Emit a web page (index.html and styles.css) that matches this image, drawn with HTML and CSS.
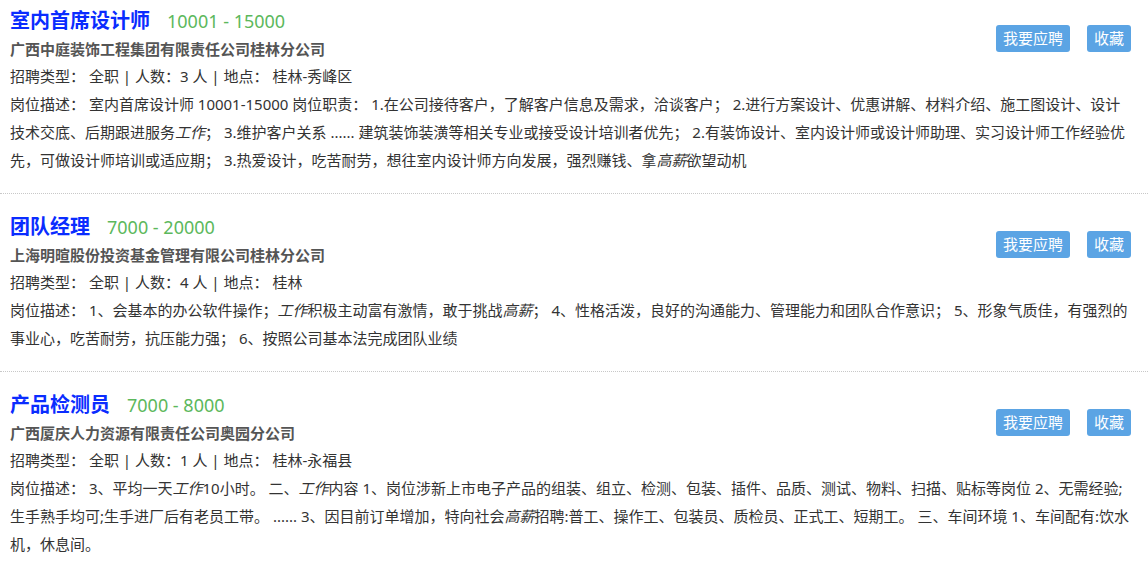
FILE: index.html
```html
<!DOCTYPE html>
<html lang="zh-CN">
<head>
<meta charset="utf-8">
<title>职位列表</title>
<link rel="stylesheet" href="styles.css">
</head>
<body>
<div class="job-list">
  <div class="job">
    <div class="job-head">
      <div class="job-main">
        <div class="job-title"><a class="job-name" href="#">室内首席设计师</a><span class="salary">10001 - 15000</span></div>
        <div class="company">广西中庭装饰工程集团有限责任公司桂林分公司</div>
        <div class="info">招聘类型： 全职 | 人数：3 人 | 地点： 桂林-秀峰区</div>
      </div>
      <div class="actions">
        <a class="btn" href="#">我要应聘</a>
        <a class="btn" href="#">收藏</a>
      </div>
    </div>
    <div class="desc">岗位描述： 室内首席设计师 10001-15000 岗位职责： 1.在公司接待客户，了解客户信息及需求，洽谈客户； 2.进行方案设计、优惠讲解、材料介绍、施工图设计、设计技术交底、后期跟进服务<em>工作</em>； 3.维护客户关系 ...... 建筑装饰装潢等相关专业或接受设计培训者优先； 2.有装饰设计、室内设计师或设计师助理、实习设计师工作经验优先，可做设计师培训或适应期； 3.热爱设计，吃苦耐劳，想往室内设计师方向发展，强烈赚钱、拿<em>高薪</em>欲望动机</div>
  </div>

  <div class="job">
    <div class="job-head">
      <div class="job-main">
        <div class="job-title"><a class="job-name" href="#">团队经理</a><span class="salary">7000 - 20000</span></div>
        <div class="company">上海明暄股份投资基金管理有限公司桂林分公司</div>
        <div class="info">招聘类型： 全职 | 人数：4 人 | 地点： 桂林</div>
      </div>
      <div class="actions">
        <a class="btn" href="#">我要应聘</a>
        <a class="btn" href="#">收藏</a>
      </div>
    </div>
    <div class="desc">岗位描述： 1、会基本的办公软件操作；<em>工作</em>积极主动富有激情，敢于挑战<em>高薪</em>； 4、性格活泼，良好的沟通能力、管理能力和团队合作意识； 5、形象气质佳，有强烈的事业心，吃苦耐劳，抗压能力强； 6、按照公司基本法完成团队业绩</div>
  </div>

  <div class="job">
    <div class="job-head">
      <div class="job-main">
        <div class="job-title"><a class="job-name" href="#">产品检测员</a><span class="salary">7000 - 8000</span></div>
        <div class="company">广西厦庆人力资源有限责任公司奥园分公司</div>
        <div class="info">招聘类型： 全职 | 人数：1 人 | 地点： 桂林-永福县</div>
      </div>
      <div class="actions">
        <a class="btn" href="#">我要应聘</a>
        <a class="btn" href="#">收藏</a>
      </div>
    </div>
    <div class="desc">岗位描述： 3、平均一天<em>工作</em>10小时。 二、<em>工作</em>内容 1、岗位涉新上市电子产品的组装、组立、检测、包装、插件、品质、测试、物料、扫描、贴标等岗位 2、无需经验;生手熟手均可;生手进厂后有老员工带。 ...... 3、因目前订单增加，特向社会<em>高薪</em>招聘:普工、操作工、包装员、质检员、正式工、短期工。 三、车间环境 1、车间配有:饮水机，休息间。</div>
  </div>
</div>
</body>
</html>
```

FILE: styles.css
```css
html, body {
  margin: 0;
  padding: 0;
  background: #ffffff;
}

body {
  font-family: "Noto Sans", "Noto Sans CJK SC", sans-serif;
  font-size: 15px;
  color: #333333;
  width: 1148px;
}

.job {
  padding: 18px 17px 19px 10px;
  border-bottom: 1px dotted #c8c8c8;
}

.job:first-child {
  padding-top: 6px;
}

.job-head {
  display: flex;
  justify-content: space-between;
  align-items: flex-start;
}

.job-title {
  display: flex;
  align-items: center;
  height: 30px;
  white-space: nowrap;
}

.job-name {
  font-size: 20px;
  line-height: 24px;
  font-weight: bold;
  color: #0a2cff;
  text-decoration: none;
}

.salary {
  font-size: 18px;
  line-height: 24px;
  color: #5cb85c;
  margin-left: 17px;
}

.company {
  font-weight: bold;
  color: #555555;
  line-height: 27px;
}

.info {
  line-height: 27px;
  color: #333333;
}

.actions {
  display: flex;
  gap: 17px;
  margin-top: 19px;
}

.btn {
  display: block;
  background: #5ba4e4;
  color: #ffffff;
  text-decoration: none;
  font-size: 15px;
  line-height: 27px;
  padding: 0 7px;
  border-radius: 3px;
}

.desc {
  line-height: 28px;
  color: #333333;
}

.desc em {
  font-style: italic;
}
```
